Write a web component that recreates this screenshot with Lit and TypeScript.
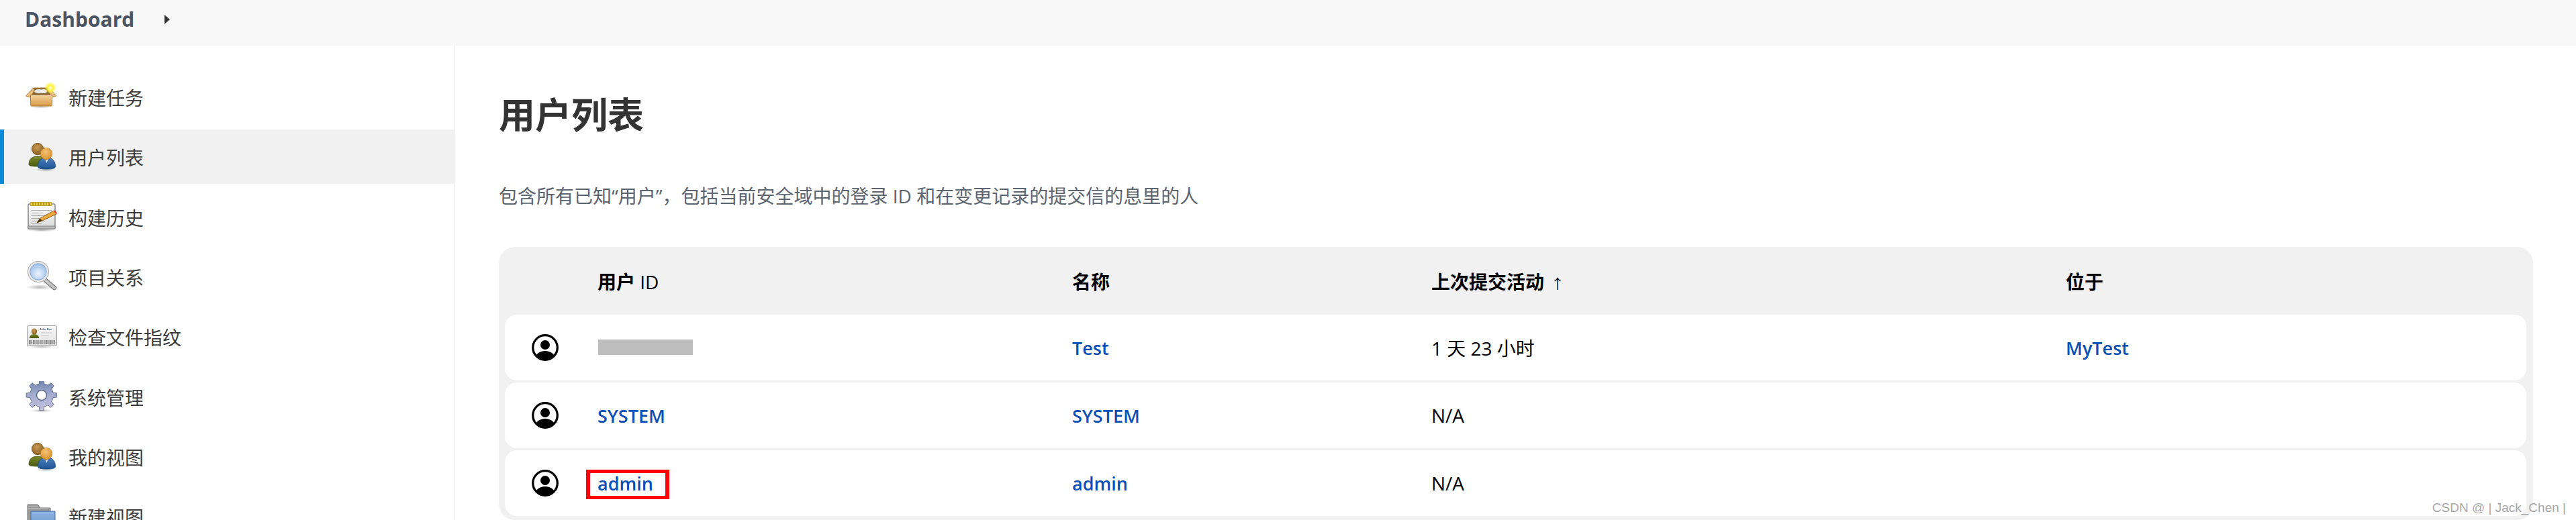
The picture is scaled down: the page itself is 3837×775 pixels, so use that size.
import { LitElement, html, css, svg } from "lit";
import { customElement } from "lit/decorators.js";

function gearPath(cx: number, cy: number, ro: number, ri: number, teeth: number) {
  const pts: string[] = [];
  const step = (Math.PI * 2) / teeth;
  for (let i = 0; i < teeth; i++) {
    const a = -Math.PI / 2 + i * step;
    const offs: [number, number][] = [
      [-0.5, ri], [-0.27, ri], [-0.17, ro], [0.17, ro], [0.27, ri],
    ];
    for (const [o, r] of offs) {
      const t = a + o * step;
      pts.push(`${(cx + r * Math.cos(t)).toFixed(2)} ${(cy + r * Math.sin(t)).toFixed(2)}`);
    }
  }
  return "M" + pts.join("L") + "Z";
}

const defs = svg`
  <defs>
    <linearGradient id="box" x1="0" y1="0" x2="0" y2="1"><stop offset="0" stop-color="#f3d5a0"/><stop offset="1" stop-color="#d99a45"/></linearGradient>
    <radialGradient id="glow"><stop offset="0" stop-color="#fffbe0"/><stop offset=".45" stop-color="#fff23a"/><stop offset="1" stop-color="#fff23a" stop-opacity="0"/></radialGradient>
    <radialGradient id="shadow"><stop offset="0" stop-color="#000" stop-opacity=".28"/><stop offset="1" stop-color="#000" stop-opacity="0"/></radialGradient>
    <radialGradient id="headA" cx=".45" cy=".35" r=".7"><stop offset="0" stop-color="#c79a54"/><stop offset="1" stop-color="#8c5d1f"/></radialGradient>
    <radialGradient id="headB" cx=".45" cy=".35" r=".7"><stop offset="0" stop-color="#f4c476"/><stop offset="1" stop-color="#d98f2a"/></radialGradient>
    <linearGradient id="olive" x1="0" y1="0" x2="0" y2="1"><stop offset="0" stop-color="#7b8a2a"/><stop offset="1" stop-color="#4c5a12"/></linearGradient>
    <linearGradient id="blue" x1="0" y1="0" x2="0" y2="1"><stop offset="0" stop-color="#4c80bd"/><stop offset="1" stop-color="#1e5596"/></linearGradient>
    <linearGradient id="page" x1="0" y1="0" x2="0" y2="1"><stop offset="0" stop-color="#fff"/><stop offset="1" stop-color="#d9d9d9"/></linearGradient>
    <radialGradient id="lens" cx=".5" cy=".6" r=".6"><stop offset="0" stop-color="#eef5fd"/><stop offset="1" stop-color="#8fb7e6"/></radialGradient>
    <linearGradient id="gear" x1="0" y1="0" x2="0" y2="1"><stop offset="0" stop-color="#6f82ad"/><stop offset=".5" stop-color="#a5aed0"/><stop offset="1" stop-color="#c6c0dc"/></linearGradient>
    <linearGradient id="card" x1="0" y1="0" x2="0" y2="1"><stop offset="0" stop-color="#fafafa"/><stop offset="1" stop-color="#dedede"/></linearGradient>
    <linearGradient id="folder" x1="0" y1="0" x2="0" y2="1"><stop offset="0" stop-color="#8eb4e0"/><stop offset="1" stop-color="#5f8fca"/></linearGradient>
    <clipPath id="acct"><circle cx="20" cy="20" r="18"/></clipPath>
  </defs>`;

const users = svg`
  <ellipse cx="31" cy="43" rx="15" ry="3" fill="url(#shadow)"/>
  <path d="M6 35c0-8 5-12 13-12s13 4 13 12c0 2-3 3-13 3S6 37 6 35Z" fill="url(#olive)" stroke="#3f4a10" stroke-width=".8"/>
  <circle cx="19" cy="12" r="8.7" fill="url(#headA)" stroke="#7c5218" stroke-width=".8"/>
  <path d="M19.5 38c0-8 4.500-13 13-13s13 5 13 13c0 3-4 4-13 4s-13-1-13-4Z" fill="url(#blue)" stroke="#19497f" stroke-width=".8"/>
  <path d="M30 26l2.500 7 2.500-7Z" fill="#eef2f7"/>
  <circle cx="32" cy="19" r="8.700" fill="url(#headB)" stroke="#c07f22" stroke-width=".8"/>`;

const icons: Record<string, unknown> = {
  box: svg`
    <ellipse cx="24" cy="38" rx="17" ry="2.500" fill="url(#shadow)"/>
    <path d="M13 10H36L38 21H10Z" fill="#8a6a3a" stroke="#b57c2c"/>
    <ellipse cx="21" cy="15" rx="7" ry="3" fill="#e6e6e6"/><ellipse cx="28" cy="15" rx="5" ry="3" fill="#f4f4f4"/>
    <path d="M13 10L1.500 22L8 24L14 14Z" fill="#eac284" stroke="#b57c2c" stroke-width="1"/>
    <path d="M36 10L47 22L40 24L35 14Z" fill="#eac284" stroke="#b57c2c" stroke-width="1"/>
    <rect x="8.500" y="20.500" width="32" height="16.500" rx="1.500" fill="url(#box)" stroke="#b57c2c"/>
    <circle cx="38" cy="10" r="9" fill="url(#glow)"/>`,
  users,
  note: svg`
    <ellipse cx="25" cy="43" rx="20" ry="2.500" fill="url(#shadow)"/>
    <rect x="5" y="4" width="40" height="37" rx="1" fill="url(#page)" stroke="#555"/>
    <rect x="5" y="37" width="40" height="4" fill="#bcbcbc" stroke="#555" stroke-width=".6"/>
    <path d="M10 13.500H40M10 17.500H25M10 21.500H40M10 25.500H34M10 29.500H30M10 33.500H26" stroke="#aaa" stroke-width="1.200" fill="none"/>
    <rect x="8" y="1.500" width="32" height="5" rx="1" fill="#f0cf42" stroke="#9a7f10" stroke-width=".7"/>
    <path d="M12 2v4M16 2v4M20 2v4M24 2v4M28 2v4M32 2v4M36 2v4" stroke="#7f6a10" stroke-width="1"/>
    <path d="M18 32L22.500 25.500L43 14L47 19L26 29Z" fill="#e8a83e" stroke="#7d5510" stroke-width=".8"/>
    <path d="M18 32L22.500 25.500L26 29Z" fill="#4a3510"/>
    <path d="M43 14L47 19L48 17.500L45 13.500Z" fill="#e02020"/>`,
  lens: svg`
    <ellipse cx="22" cy="39" rx="20" ry="4" fill="url(#shadow)"/>
    <path d="M31 29L44 40" stroke="#666" stroke-width="6.500" stroke-linecap="round"/>
    <path d="M31 29L44 40" stroke="#c4c4c4" stroke-width="4.500" stroke-linecap="round"/>
    <circle cx="20" cy="16" r="14" fill="url(#lens)" stroke="#e8e8e8" stroke-width="3.500"/>
    <circle cx="20" cy="16" r="15.700" fill="none" stroke="#888" stroke-width=".7"/>
    <circle cx="20" cy="16" r="12.200" fill="none" stroke="#6a8fba" stroke-width=".7"/>`,
  card: svg`
    <ellipse cx="25" cy="39" rx="19" ry="2" fill="url(#shadow)"/>
    <rect x="3.500" y="7.500" width="44" height="30" rx="2" fill="url(#card)" stroke="#999"/>
    <path d="M7 26c0-4 3-6 7-6s7 2 7 6Z" fill="url(#olive)"/>
    <ellipse cx="14" cy="16" rx="4.200" ry="4.600" fill="url(#headA)"/>
    <text x="22" y="14" font-size="4" font-weight="700" fill="#555" font-family="Liberation Sans, sans-serif">John Doe</text>
    <path d="M24 18H40M24 22H36" stroke="#c4c4c4" stroke-width="1.200"/>
    <path d="M6.500 29v6M8 29v6M10 29v6M12.500 29v6M14 29v6M16.500 29v6M18 29v6M20 29v6M22.500 29v6M24 29v6M26 29v6M28.500 29v6M30 29v6M32.500 29v6M34 29v6M36 29v6M38.500 29v6M40 29v6M42 29v6M44.500 29v6" stroke="#555" stroke-width=".8"/>`,
  gear: svg`
    <ellipse cx="25" cy="44" rx="17" ry="2.500" fill="url(#shadow)"/>
    <path d="${gearPath(25, 21, 23, 17.500, 8)}" fill="url(#gear)" stroke="#4d5c80" stroke-width=".8" stroke-linejoin="round"/>
    <circle cx="25" cy="21" r="7.500" fill="#fff" stroke="#56658a" stroke-width="1.400"/>`,
  folder: svg`
    <path d="M4 6H19L23 11H38V44H4Z" fill="#9a9a9a" stroke="#777"/>
    <path d="M5 9H20M5 12H36" stroke="#c4c4c4"/>
    <path d="M9 16H45V48H9Z" fill="url(#folder)" stroke="#3d6aa5"/>`,
};

const navItems = [
  ["box", "新建任务"],
  ["users", "用户列表"],
  ["note", "构建历史"],
  ["lens", "项目关系"],
  ["card", "检查文件指纹"],
  ["gear", "系统管理"],
  ["users", "我的视图"],
  ["folder", "新建视图"],
];

const rows = [
  { id: null, name: "Test", last: "1 天 23 小时", loc: "MyTest" },
  { id: "SYSTEM", name: "SYSTEM", last: "N/A", loc: "" },
  { id: "admin", name: "admin", last: "N/A", loc: "" },
];

@customElement("app-root")
export class AppRoot extends LitElement {
  static styles = css`
    :host {
      display: block;
      position: relative;
      width: 3837px;
      height: 775px;
      overflow: hidden;
      background: #fff;
      font-family: "Open Sans", "Noto Sans CJK SC", sans-serif;
      font-size: 28px;
      color: #333;
    }
    .defs { width: 0; height: 0; position: absolute; }
    .topbar {
      height: 68px;
      background: #f8f8f8;
      display: flex;
      align-items: center;
      padding: 0 0 10px 37px;
      box-sizing: border-box;
    }
    .crumb {
      font-size: 30px;
      font-weight: 700;
      color: #4b5462;
      line-height: 58px;
    }
    .caret {
      width: 0;
      height: 0;
      margin: 0 0 0 45px;
      border-left: 8px solid #333;
      border-top: 7.5px solid transparent;
      border-bottom: 7.5px solid transparent;
    }
    .layout { display: flex; height: 707px; }
    .side {
      width: 678px;
      flex: none;
      box-sizing: border-box;
      border-right: 2px solid #f2f2f2;
      padding-top: 35.67px;
      display: flex;
      flex-direction: column;
      gap: 8.33px;
    }
    .item {
      flex: none;
      height: 81px;
      display: flex;
      align-items: center;
      padding-left: 37px;
      gap: 17px;
      color: #3d3d3d;
    }
    .item.active {
      background: #f1f1f1;
      box-shadow: inset 6px 0 0 #0a8ad8;
    }
    .item svg { flex: none; margin-top: 2px; }
    .item span { line-height: 40px; margin-top: 4px; }
    .main { flex: 1; padding: 0 64px 0 65px; min-width: 0; }
    h1 {
      margin: 67px 0 0;
      font-size: 54px;
      line-height: 72px;
      font-weight: 700;
      color: #333;
    }
    .desc {
      margin: 65px 0 0;
      line-height: 40px;
      color: #5c6470;
    }
    .table {
      margin-top: 56px;
      background: #f1f1f1;
      border-radius: 24px;
      padding: 0 10px 6px 9px;
      display: flex;
      flex-direction: column;
      gap: 3.5px;
    }
    .row {
      display: grid;
      grid-template-columns: 138px 707px 535px 945px 1fr;
      align-items: center;
      height: 97.5px;
      color: #000;
    }
    .head {
      font-weight: 700;
      padding-top: 5px;
      box-sizing: border-box;
    }
    .head .num { font-weight: 400; }
    .arrow { font-weight: 400; margin-left: 10px; font-size: 20px; }
    .body {
      background: #fff;
      border-radius: 18px;
    }
    .avatar { display: block; margin-left: 40px; }
    a { color: #0b4fb5; text-decoration: none; font-weight: 600; font-size: 27px; }
    .mask {
      display: block;
      width: 141px;
      height: 23px;
      background: #bdbdbd;
      margin-left: 1px;
    }
    .mark {
      position: absolute;
      left: 873px;
      top: 700px;
      width: 124px;
      height: 44px;
      box-sizing: border-box;
      border: 5px solid #ff0000;
      border-left-width: 6px;
      border-right-width: 6px;
    }
    .watermark {
      position: absolute;
      right: 15px;
      top: 745px;
      font-family: "Liberation Sans", sans-serif;
      font-size: 19px;
      line-height: 24px;
      color: #a8a8a8;
      white-space: pre;
    }
  `;

  private avatar() {
    return html`<svg class="avatar" width="40" height="40" viewBox="0 0 40 40">
      <circle cx="20" cy="20" r="18.300" fill="#fff" stroke="#000" stroke-width="3.300" />
      <circle cx="20" cy="16" r="7" fill="#000" />
      <ellipse cx="20" cy="38" rx="15.500" ry="13" fill="#000" clip-path="url(#acct)" />
    </svg>`;
  }

  render() {
    return html`
      <svg class="defs" aria-hidden="true">${defs}</svg>
      <div class="topbar"><span class="crumb">Dashboard</span><i class="caret"></i></div>
      <div class="layout">
        <nav class="side">
          ${navItems.map(
            ([icon, label], i) => html`<div class="item ${i === 1 ? "active" : ""}">
              <svg width="48" height="48" viewBox="0 0 48 48">${icons[icon]}</svg>
              <span>${label}</span>
            </div>`,
          )}
        </nav>
        <main class="main">
          <h1>用户列表</h1>
          <p class="desc">包含所有已知“用户”，包括当前安全域中的登录 ID 和在变更记录的提交信的息里的人</p>
          <div class="table">
            <div class="row head">
              <span></span>
              <span>用户 <span class="num">ID</span></span>
              <span>名称</span>
              <span>上次提交活动<span class="arrow">↑</span></span>
              <span>位于</span>
            </div>
            ${rows.map(
              (r) => html`<div class="row body">
                ${this.avatar()}
                <span>${r.id ? html`<a href="#">${r.id}</a>` : html`<i class="mask"></i>`}</span>
                <span><a href="#">${r.name}</a></span>
                <span>${r.last}</span>
                <span>${r.loc ? html`<a href="#">${r.loc}</a>` : ""}</span>
              </div>`,
            )}
          </div>
        </main>
      </div>
      <div class="mark"></div>
      <div class="watermark">CSDN @ | Jack_Chen |</div>
    `;
  }
}
